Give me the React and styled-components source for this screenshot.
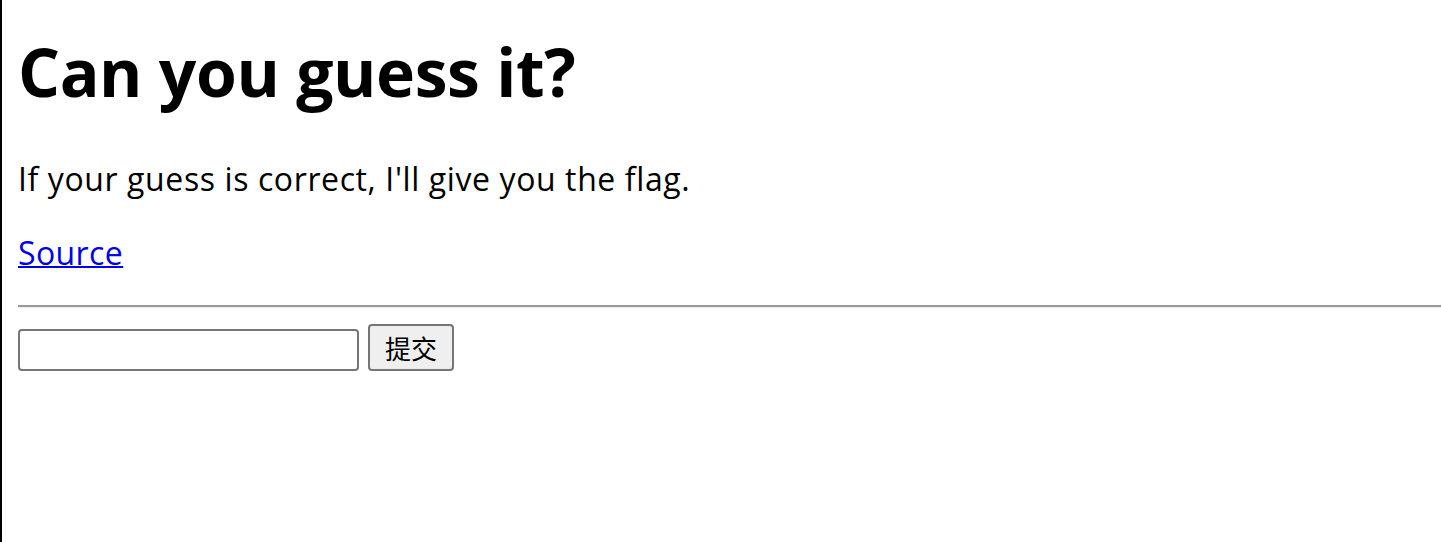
import React from "react";
import styled, { createGlobalStyle } from "styled-components";

const GlobalStyle = createGlobalStyle`
  html, body {
    margin: 0;
    padding: 0;
    background: #ffffff;
  }
  body {
    font-family: "Open Sans", "Noto Sans", "Noto Sans CJK SC", sans-serif;
    color: #000000;
  }
`;

const Page = styled.div`
  min-height: 542px;
  box-sizing: border-box;
  border-left: 2px solid #000000;
  padding: 0 0 0 16px;
  display: flex;
  flex-direction: column;
  align-items: flex-start;
`;

const Title = styled.h1`
  margin: 26px 0 0;
  font-size: 66px;
  line-height: 90px;
  font-weight: 700;
  letter-spacing: -0.4px;
`;

const Text = styled.p`
  margin: 42px 0 0;
  font-size: 32px;
  line-height: 42px;
  letter-spacing: 0.6px;
`;

const SourceLink = styled.a`
  margin-top: 32px;
  font-size: 32px;
  line-height: 42px;
  color: #0000ee;
  text-decoration: underline;
  text-decoration-thickness: 2px;
  letter-spacing: 0.4px;
`;

const Rule = styled.hr`
  align-self: stretch;
  margin: 31px 0 0;
  height: 0;
  border: none;
  border-top: 2px solid #9a9a9a;
  border-bottom: 1px solid #eeeeee;
`;

const Form = styled.form`
  margin-top: 16px;
  display: flex;
  align-items: flex-end;
  gap: 9px;
`;

const Field = styled.input`
  box-sizing: border-box;
  width: 341px;
  height: 42px;
  border: 2px solid #767676;
  border-radius: 4px;
  background: #ffffff;
  padding: 0 6px;
  font-size: 24px;
`;

const Submit = styled.button`
  box-sizing: border-box;
  width: 86px;
  height: 47px;
  border: 2px solid #767676;
  border-radius: 4px;
  background: #efefef;
  font-family: "Noto Sans CJK SC", sans-serif;
  font-size: 26px;
  color: #000000;
  padding: 0;
`;

export default function App() {
  return (
    <>
      <GlobalStyle />
      <Page>
        <Title>Can you guess it?</Title>
        <Text>If your guess is correct, I'll give you the flag.</Text>
        <SourceLink href="#source">Source</SourceLink>
        <Rule />
        <Form onSubmit={(e) => e.preventDefault()}>
          <Field type="text" name="guess" />
          <Submit type="submit">提交</Submit>
        </Form>
      </Page>
    </>
  );
}
